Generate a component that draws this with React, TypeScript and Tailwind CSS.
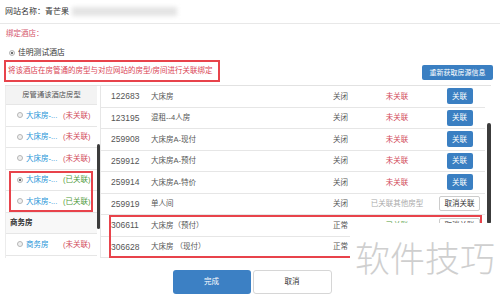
import React from "react";

type Room = {
  id: string;
  name: string;
  state: string;
  link: "none" | "other" | "done" | "hidden";
};

const rooms: Room[] = [
  { id: "122683", name: "大床房", state: "关闭", link: "none" },
  { id: "123195", name: "混租--4人房", state: "关闭", link: "none" },
  { id: "259908", name: "大床房A-现付", state: "关闭", link: "none" },
  { id: "259912", name: "大床房A-预付", state: "关闭", link: "none" },
  { id: "259914", name: "大床房A-特价", state: "关闭", link: "none" },
  { id: "259919", name: "单人间", state: "关闭", link: "other" },
  { id: "306611", name: "大床房（预付）", state: "正常", link: "done" },
  // last row's right part sits under the watermark
  { id: "306628", name: "大床房 （现付）", state: "正常", link: "hidden" },
];

function Radio({ checked }: { checked?: boolean }) {
  return (
    <span className="w-[6px] h-[6px] rounded-full border border-[#b5b5b5] bg-[#f0f0f0] flex items-center justify-center shrink-0">
      {checked && <span className="w-[2px] h-[2px] rounded-full bg-[#444]" />}
    </span>
  );
}

function LocalRow({ name, linked, checked }: { name: string; linked: boolean; checked?: boolean }) {
  return (
    <div className="h-[21.5px] border-b border-[#e6e6e6] flex items-center pl-[11px]">
      <Radio checked={checked} />
      <span className="ml-[3px] w-[37px] text-[#2795d8]">{name}</span>
      {linked ? (
        <span className="text-[#4f9a3b]">(已关联)</span>
      ) : (
        <span className="text-[#d24b5a]">(未关联)</span>
      )}
    </div>
  );
}

function RoomRow({ room }: { room: Room }) {
  return (
    <div className="h-[21.5px] border-b border-[#e6e6e6] grid grid-cols-[50px_175px_35px_72px_53px] items-center text-[#555]">
      <span className="pl-[10px] text-[8.5px]">{room.id}</span>
      <span>{room.name}</span>
      <span className="pl-[7px]">{room.state}</span>
      <span className="text-center">
        {room.link === "none" && <span className="text-[#d24b5a]">未关联</span>}
        {room.link === "other" && <span className="text-[#aaa]">已关联其他房型</span>}
        {room.link === "done" && <span className="text-[#4f9a3b]">已关联</span>}
      </span>
      <span className="flex justify-center">
        {room.link === "none" && (
          <button className="w-[26px] h-[16px] rounded-[2px] bg-[#3a7fc2] text-white text-[7.5px]">关联</button>
        )}
        {(room.link === "other" || room.link === "done") && (
          <button className="w-[41px] h-[15px] rounded-[2px] border border-[#ccc] bg-white text-[#333] text-[7.5px]">取消关联</button>
        )}
      </span>
    </div>
  );
}

export default function App() {
  return (
    <div className="relative w-[500px] h-[296px] bg-white overflow-hidden text-[7.5px] leading-none text-[#444] font-['Liberation_Sans','Noto_Sans_CJK_SC',sans-serif]">
      <div className="h-[24px] border-b border-[#e8e8e8] flex items-center pl-[5px]">
        <span className="text-[8px] text-[#333]">网站名称：青芒果</span>
        <span className="ml-[3px] w-[105px] h-[9px] bg-[#e4e4e4] blur-[2px]" />
      </div>

      <div className="h-[19px] flex items-center pl-[6px] text-[#d4536a] text-[7.5px]">绑定酒店：</div>

      <div className="h-[17px] pt-[2px] flex items-center pl-[9px] gap-[3px]">
        <Radio checked />
        <span className="text-[7.8px] text-[#333]">佳明测试酒店</span>
      </div>

      <div className="flex items-end justify-between pl-[4px] pr-[7px]">
        <div className="h-[22px] w-[216px] border-2 border-[#e8434b] flex items-center pl-[2px] text-[#d94455] whitespace-nowrap">
          将该酒店在房管通的房型与对应网站的房型/房间进行关联绑定
        </div>
        <button className="mb-[2px] w-[71px] h-[15px] rounded-[2px] bg-[#3a7fc2] text-white text-[7px]">重新获取房源信息</button>
      </div>

      <div className="mt-[3px] ml-[5px] flex border-t border-[#e2e2e2] w-[486px]">
        <div className="w-[92px] border-l border-[#ececec]">
          <div className="h-[19px] bg-[#f3f3f3] border-b border-[#e6e6e6] flex items-center justify-center text-[#555] text-[7.3px]">
            房管通该酒店房型
          </div>
          <LocalRow name="大床房-..." linked={false} />
          <LocalRow name="大床房-..." linked={false} />
          <LocalRow name="大床房-..." linked={false} />
          <div className="relative">
            <LocalRow name="大床房-..." linked checked />
            <LocalRow name="大床房-..." linked />
            <div className="absolute left-[3px] right-[4px] top-[1px] bottom-[1px] border-2 border-[#e8434b]" />
          </div>
          <div className="h-[21.5px] border-b border-[#e6e6e6] bg-[#f8f8f8] flex items-center pl-[4px] font-bold text-[#333]">
            商务房
          </div>
          <LocalRow name="商务房" linked={false} />
        </div>

        <div className="w-[3px]">
          <div className="mt-[58px] h-[85px] rounded-full bg-[#3c3c3c]" />
        </div>

        <div className="w-[385px] border-l border-[#e6e6e6]">
          {rooms.slice(0, 6).map((r) => (
            <RoomRow key={r.id} room={r} />
          ))}
          <div className="relative">
            {rooms.slice(6).map((r) => (
              <RoomRow key={r.id} room={r} />
            ))}
            <div className="absolute left-[8px] right-[3px] top-0 bottom-0 border-2 border-[#e8434b]" />
          </div>
        </div>

        <div className="w-[4px] ml-[2px]">
          <div className="mt-[37px] h-[101px] rounded-full bg-[#3c3c3c]" />
        </div>
      </div>

      <div className="mt-[12px] flex justify-center gap-[2px] pl-[4px]">
        <button className="w-[78px] h-[24px] rounded-[3px] bg-[#3c80c4] text-white text-[7.5px]">完成</button>
        <button className="w-[79px] h-[24px] rounded-[3px] border border-[#d6d6d6] bg-white text-[#333] text-[7.5px]">取消</button>
      </div>

      <div className="absolute left-[350px] top-[223px] w-[150px] h-[73px] bg-white pl-[5px] pt-[16px]">
        <span className="text-[35px] leading-none font-light text-[#cfcfcf] font-['Noto_Sans_CJK_SC',sans-serif]">软件技巧</span>
      </div>
    </div>
  );
}
